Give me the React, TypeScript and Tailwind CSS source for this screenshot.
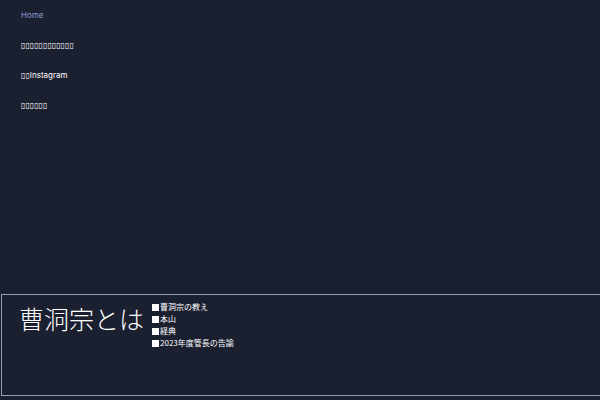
const navItems = [
  { label: 'Home', active: true },
  { label: '▯▯▯▯▯▯▯▯▯▯▯▯', active: false },
  { label: '▯▯Instagram', active: false },
  { label: '▯▯▯▯▯▯', active: false },
];

const links = ['曹洞宗の教え', '本山', '経典', '2023年度管長の告諭'];

export default function App() {
  return (
    <div className="h-[400px] w-full overflow-hidden bg-[#1b2030] text-white">
      {/* Header nav */}
      <nav className="h-[294px]">
        <ul className="flex flex-col pl-[21px] font-['Inter','DejaVu_Sans',sans-serif] text-[8px]">
          {navItems.map((item) => (
            <li key={item.label} className="leading-[30px]">
              <a className={item.active ? 'text-[#8f98cf]' : 'text-white'}>{item.label}</a>
            </li>
          ))}
        </ul>
      </nav>

      {/* Section */}
      <section className="ml-[1px] flex h-[102px] w-[640px] gap-[8px] border border-[#9a9ea8] pl-[17px]">
        <h2 className="mt-[10px] font-['Noto_Sans_CJK_JP',sans-serif] text-[25px] font-light leading-[26px]">
          曹洞宗とは
        </h2>
        <ul className="pt-[6px] font-['Noto_Sans_CJK_JP',serif] text-[8px] leading-[12px]">
          {links.map((l) => (
            <li key={l} className="flex items-center">
              <span className="mr-[1px] inline-block h-[7px] w-[7px] bg-white" />
              {l}
            </li>
          ))}
        </ul>
      </section>
    </div>
  );
}
